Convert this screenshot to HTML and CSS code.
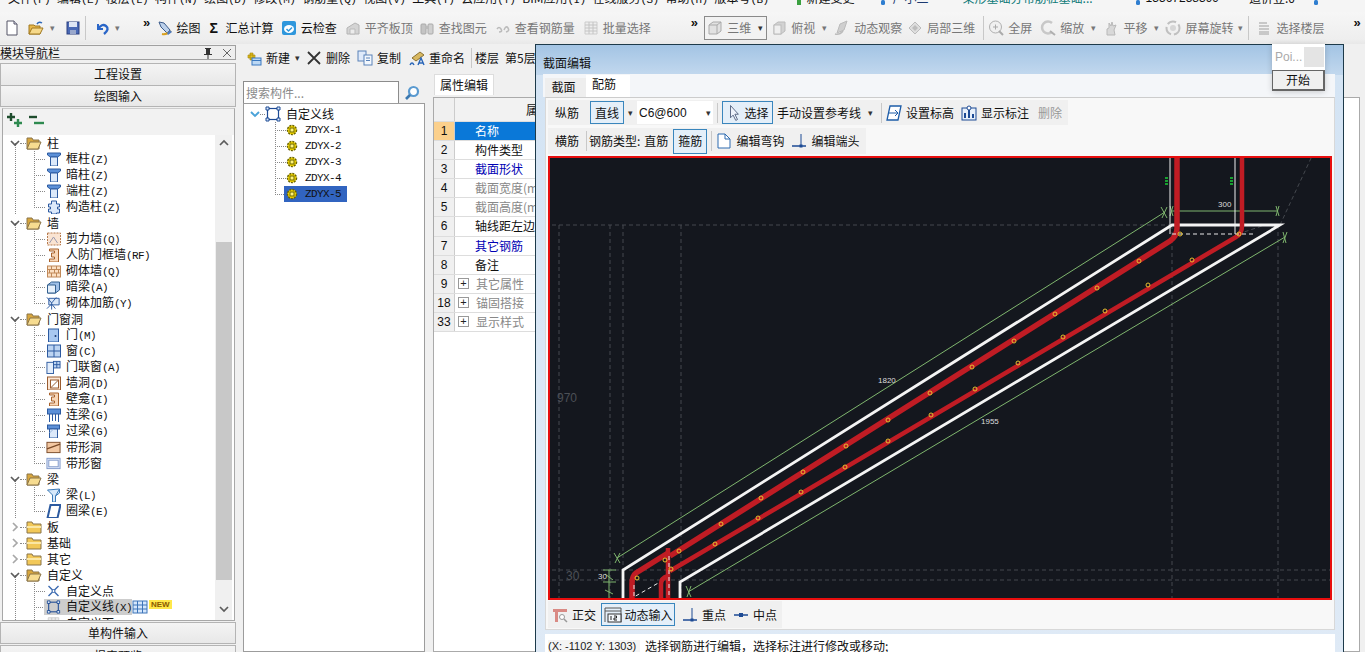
FILE: index.html
```html
<!DOCTYPE html>
<html lang="zh">
<head>
<meta charset="utf-8">
<title>截面编辑</title>
<link rel="stylesheet" href="styles.css">
</head>
<body>
<svg class="defs" xmlns="http://www.w3.org/2000/svg">
  <symbol id="new" viewBox="0 0 16 16"><path d="M3 1h7l3 3v11H3z" fill="#fff" stroke="#556"/><path d="M10 1v3h3" fill="#dde" stroke="#556"/></symbol>
  <symbol id="open" viewBox="0 0 16 16"><path d="M1 14V5h5l1 1h5v8z" fill="#e8b84a" stroke="#a07820"/><path d="M1 14l3-6h11l-3 6z" fill="#f6d98a" stroke="#a07820"/><path d="M9 4q2-3 5-1" fill="none" stroke="#2a66b8" stroke-width="1.5"/></symbol>
  <symbol id="save" viewBox="0 0 16 16"><rect x="2" y="2" width="12" height="12" fill="#4a69b5" stroke="#2c4080"/><rect x="4" y="2" width="8" height="5" fill="#dfe6f5"/><rect x="5" y="10" width="6" height="4" fill="#9aa8cc"/></symbol>
  <symbol id="undo" viewBox="0 0 16 16"><path d="M4 4v5h5" fill="none" stroke="#2a66c8" stroke-width="2"/><path d="M4 9q4-6 8-3t-2 8" fill="none" stroke="#2a66c8" stroke-width="2.4"/></symbol>
  <symbol id="draw" viewBox="0 0 16 16"><path d="M2 2l5 1 6 7-3 3-6-6z" fill="#bcd0ea" stroke="#3a5a8a"/><path d="M5 14q5 1 9-3" fill="none" stroke="#d8a020" stroke-width="2"/><path d="M10 13l3-3 2 2-4 3z" fill="#4a79c0"/></symbol>
  <symbol id="cloud" viewBox="0 0 16 16"><rect x="1" y="1" width="14" height="14" rx="2" fill="#2f97dc"/><ellipse cx="8" cy="9" rx="5" ry="4" fill="#fff"/><path d="M5.500 9l2 2 3.500-3.500" fill="none" stroke="#2f97dc" stroke-width="1.500"/></symbol>
  <symbol id="flat" viewBox="0 0 16 16"><path d="M2 14V8l8-5 4 2v9z" fill="#d4d4d4" stroke="#b4b4b4"/><path d="M5 14V9h5v5z" fill="#ececec" stroke="#bbb"/></symbol>
  <symbol id="find" viewBox="0 0 16 16"><rect x="2" y="4" width="5" height="10" rx="1" fill="#c4c4c4" stroke="#aaa"/><rect x="9" y="4" width="5" height="10" rx="1" fill="#d0d0d0" stroke="#aaa"/><rect x="6" y="6" width="4" height="3" fill="#bbb"/></symbol>
  <symbol id="vrebar" viewBox="0 0 16 16"><path d="M2 9q2-3 4 0t-2 3M9 10q2-5 4-2t-2 4" fill="none" stroke="#bbb" stroke-width="1.500"/></symbol>
  <symbol id="batch" viewBox="0 0 16 16"><path d="M2 2h12v12H2z" fill="#eee" stroke="#ccc"/><path d="M2 5h12M2 8h12M2 11h12M6 2v12M10 2v12" stroke="#c4c4c4"/></symbol>
  <symbol id="cube" viewBox="0 0 16 16"><path d="M2 5l4-3h8v9l-4 3H2z" fill="#e2e2e2" stroke="#aaa"/><path d="M2 5h8v9M10 5l4-3" fill="none" stroke="#aaa"/></symbol>
  <symbol id="cube2" viewBox="0 0 16 16"><path d="M3 5l4-3h7v9l-4 3H3z" fill="#d2d2d2" stroke="#bbb"/><rect x="3" y="5" width="7" height="9" fill="#efefef" stroke="#bbb"/></symbol>
  <symbol id="orbit" viewBox="0 0 16 16"><path d="M3 13l3-9 7-3-3 9z" fill="#cfcfcf" stroke="#bbb"/><path d="M1 14q5 1 8-3" fill="none" stroke="#bbb" stroke-width="1.500"/></symbol>
  <symbol id="local" viewBox="0 0 16 16"><path d="M8 2l6 6-6 6-6-6z" fill="#dedede" stroke="#bbb"/><path d="M5 8l3-3 3 3-3 3z" fill="#bdbdbd"/></symbol>
  <symbol id="zoomall" viewBox="0 0 16 16"><circle cx="7.500" cy="7" r="6" fill="#f0f0f0" stroke="#b0b0b0"/><path d="M5 7h5M7.500 4.500v5" stroke="#aaa"/><path d="M11 11l4 4" stroke="#aaa" stroke-width="2"/></symbol>
  <symbol id="zoom" viewBox="0 0 16 16"><path d="M12 3a6 6 0 1 0 0 9" fill="none" stroke="#c8c8c8" stroke-width="2.500"/><path d="M10 11l5 4" stroke="#b0b0b0" stroke-width="2"/></symbol>
  <symbol id="pan" viewBox="0 0 16 16"><path d="M4 15V9l2-1V3l2 3 1-4 1 4 3-1-2 5 1 5z" fill="#d8d8d8" stroke="#b8b8b8"/></symbol>
  <symbol id="rot" viewBox="0 0 16 16"><circle cx="8" cy="8" r="6.500" fill="none" stroke="#c0c0c0" stroke-width="2" stroke-dasharray="9 3"/><circle cx="8" cy="8" r="3" fill="#d6d6d6"/></symbol>
  <symbol id="floors" viewBox="0 0 16 16"><path d="M3 3h8M3 6h10M3 9h10M3 12h10M3 14h10" stroke="#bbb" stroke-width="1.500"/></symbol>

  <symbol id="fopen" viewBox="0 0 16 14"><path d="M1 13V2h5l1 2h6v9z" fill="#d8a63c" stroke="#8a7448"/><path d="M1 13l3-7h11l-3 7z" fill="#f7dc90" stroke="#8a7448"/></symbol>
  <symbol id="fclosed" viewBox="0 0 16 14"><path d="M1 13V2h5l1 2h8v9z" fill="#f2c858" stroke="#8a7448"/><path d="M1 6h14v2H1z" fill="#fbe7a4"/></symbol>
  <symbol id="col" viewBox="0 0 14 14"><path d="M1 1h13v2l-3 2H4L1 3z" fill="#5c90d8" stroke="#2c5aa0"/><path d="M4 5h7v9H4z" fill="#dce9fa" stroke="#2c5aa0"/></symbol>
  <symbol id="scol" viewBox="0 0 14 14"><path d="M5 1h5v3h3v3h-2v2h2v4h-3v1H5v-2H2V9h2V7H2V4h3z" fill="#dce9fa" stroke="#2c5aa0"/></symbol>
  <symbol id="shear" viewBox="0 0 14 14"><rect x="1" y="1" width="13" height="12" fill="#fae4d2" stroke="#b77b4e" stroke-dasharray="2 1"/><path d="M3 11l4-6 4 6" fill="none" stroke="#9a9ab0"/></symbol>
  <symbol id="dframe" viewBox="0 0 14 14"><path d="M3 1h9v13H3v-3h5V9H5V5h3V3H3z" fill="#f8d7b8" stroke="#a8622c"/></symbol>
  <symbol id="brick" viewBox="0 0 14 14"><rect x="1" y="2" width="13" height="11" fill="#fbe0c4" stroke="#c08858"/><path d="M1 5.500h13M1 9h13M5 2v3.500M10 2v3.500M3 5.500V9M8 5.500V9M12 5.500V9M5 9v4M10 9v4" stroke="#c08858" fill="none"/></symbol>
  <symbol id="hbeam" viewBox="0 0 14 14"><path d="M1 5l4-3h8v8l-4 3H1z" fill="#9fc0e8" stroke="#33608f"/><path d="M1 5h8v8H1z" fill="#e6f0fb" stroke="#33608f"/></symbol>
  <symbol id="mreb" viewBox="0 0 16 14"><path d="M3 2h11v7H3z" fill="#dbe8f8" stroke="#2c5aa0"/><path d="M1 1l5 6 5-6M6 7v7M1 13l5-5 4 5" fill="none" stroke="#2c5aa0"/></symbol>
  <symbol id="door" viewBox="0 0 14 14"><rect x="2" y="1" width="10" height="13" fill="#a8c8f0" stroke="#2c5aa0"/><circle cx="9" cy="8" r="1" fill="#1c3a70"/></symbol>
  <symbol id="win" viewBox="0 0 14 14"><rect x="1" y="1" width="13" height="12" fill="#bcd4f2" stroke="#2c5aa0"/><path d="M7.500 1v12M1 7h13" stroke="#2c5aa0"/></symbol>
  <symbol id="dwin" viewBox="0 0 16 14"><rect x="1" y="2" width="7" height="12" fill="#e4eefb" stroke="#2c5aa0"/><rect x="8" y="1" width="7" height="7" fill="#bcd4f2" stroke="#2c5aa0"/><path d="M11.500 1v7M8 4.500h7" stroke="#2c5aa0"/></symbol>
  <symbol id="hole" viewBox="0 0 14 14"><rect x="1" y="1" width="13" height="13" fill="#fbe6d4" stroke="#9a5c30"/><rect x="4" y="4" width="8" height="8" fill="#fff" stroke="#9a5c30"/><path d="M4 12l8-8" stroke="#9a5c30"/></symbol>
  <symbol id="lbeam" viewBox="0 0 14 14"><rect x="1" y="1" width="13" height="5" fill="#5c90d8" stroke="#2c5aa0"/><path d="M3 6v8M6 6v7M9 6v7M12 6v8" stroke="#2c5aa0"/></symbol>
  <symbol id="lintel" viewBox="0 0 14 14"><rect x="1" y="1" width="12" height="4" fill="#5c90d8" stroke="#2c5aa0"/><path d="M3 5h8v9H3z" fill="#dce9fa" stroke="#2c5aa0"/><path d="M3 9l4-4" stroke="#9ab8e0"/></symbol>
  <symbol id="shole" viewBox="0 0 16 14"><rect x="1" y="2" width="14" height="11" fill="#f3c8a2" stroke="#7a4a28"/><path d="M1 9l14-5" stroke="#7a4a28" stroke-width="1.500"/></symbol>
  <symbol id="swin" viewBox="0 0 16 14"><rect x="1" y="2" width="14" height="11" fill="#dfe8fa" stroke="#8098c8"/><rect x="3" y="4" width="10" height="7" fill="#fff" stroke="#8098c8"/></symbol>
  <symbol id="beam" viewBox="0 0 14 14"><path d="M1 2l12-1v4L9 8v6H6V7z" fill="#d6e8fa" stroke="#3c7ab8"/><path d="M9 8L13 1" stroke="#3c7ab8"/></symbol>
  <symbol id="ring" viewBox="0 0 14 14"><path d="M4 1h10l-3 13H1z" fill="#fff" stroke="#2c5aa0" stroke-width="2"/></symbol>
  <symbol id="xpt" viewBox="0 0 14 14"><path d="M2 2l10 10M12 2L2 12" stroke="#3c6ab0" stroke-width="1.400"/><circle cx="7" cy="7" r="1.500" fill="#fff" stroke="#3c6ab0"/></symbol>
  <symbol id="box" viewBox="0 0 16 16"><rect x="2.500" y="2.500" width="11" height="11" fill="none" stroke="#1d4a94" stroke-width="1.200"/><path d="M1 1h3v3H1zM12 1h3v3h-3zM1 12h3v3H1zM12 12h3v3h-3z" fill="#dce9fa" stroke="#1d4a94"/></symbol>
  <symbol id="gear" viewBox="0 0 12 12"><circle cx="6" cy="6" r="4.500" fill="#ffe000" stroke="#6a6400" stroke-width="1.500" stroke-dasharray="2 1"/><rect x="4" y="4" width="4" height="4" fill="#fff47a" stroke="#6a6400"/></symbol>
  <symbol id="grid" viewBox="0 0 16 14"><rect x="1" y="1" width="14" height="12" fill="#d4e6fb" stroke="#3d74b8"/><path d="M5.500 1v12M10.500 1v12M1 5h14M1 9h14" stroke="#3d74b8"/></symbol>

  <symbol id="add" viewBox="0 0 16 16"><path d="M2 5h7v3H2zM4 3h3v7H4z" fill="#e6c020" stroke="#a08000" stroke-width=".6"/><rect x="6" y="8" width="9" height="7" fill="#bcd8f4" stroke="#3a78c0"/><path d="M6 10.500h9" stroke="#3a78c0"/></symbol>
  <symbol id="del" viewBox="0 0 16 16"><path d="M2 2l12 12M14 2L2 14" stroke="#333" stroke-width="1.800"/></symbol>
  <symbol id="copy" viewBox="0 0 16 16"><rect x="1" y="1" width="8" height="10" fill="#dfeafa" stroke="#5a82b8"/><rect x="7" y="5" width="8" height="10" fill="#f2f7fd" stroke="#5a82b8"/><path d="M9 8h4M9 10.500h4" stroke="#5a82b8"/></symbol>
  <symbol id="ren" viewBox="0 0 16 16"><path d="M3 8l8-6 4 3-8 6z" fill="#d8b860" stroke="#8a7030"/><path d="M1 15q2-4 4 0M9 15l3-7 3 7M10 13h4" fill="none" stroke="#2a66b8" stroke-width="1.400"/></symbol>
  <symbol id="search" viewBox="0 0 16 16"><circle cx="9.500" cy="6.500" r="4.500" fill="#fff" stroke="#5a9ad0" stroke-width="2.200"/><path d="M6 10l-4 4" stroke="#3a78b0" stroke-width="2.600"/></symbol>
  <symbol id="plus" viewBox="0 0 18 16"><path d="M5 1v8M1 5h8" stroke="#1f4d2e" stroke-width="2.400"/><path d="M12 7v8M8 11h8" stroke="#2e8a50" stroke-width="2.400"/></symbol>
  <symbol id="minus" viewBox="0 0 18 16"><path d="M1 5h8" stroke="#1f4d2e" stroke-width="2.400"/><path d="M6 11h10" stroke="#2e8a50" stroke-width="2.400"/></symbol>
  <symbol id="cursor" viewBox="0 0 16 18"><path d="M4 1l9 10H9l3 6-2 1-3-6-3 3z" fill="#eef3fb" stroke="#4a5a78"/></symbol>
  <symbol id="elev" viewBox="0 0 16 16"><path d="M4 1h11l-3 14H1z" fill="#fff" stroke="#1d5ca8" stroke-width="1.300"/><path d="M3 8h9M9 5l3 3-3 3" fill="none" stroke="#1d5ca8"/></symbol>
  <symbol id="mark" viewBox="0 0 16 16"><rect x="1" y="3" width="14" height="12" fill="#e8f0fa" stroke="#1d4a94"/><path d="M4 13V8M8 13V5M12 13V9" stroke="#1d4a94" stroke-width="2"/><circle cx="8" cy="3" r="2" fill="#fff" stroke="#1d4a94"/></symbol>
  <symbol id="hook" viewBox="0 0 16 16"><path d="M2 1h7l5 5v9H2z" fill="#fff" stroke="#2c6ab0"/><path d="M9 1v5h5" fill="none" stroke="#2c6ab0"/></symbol>
  <symbol id="end" viewBox="0 0 16 16"><path d="M1 13h14" stroke="#1d4a94" stroke-width="1.500"/><path d="M10 1v11" stroke="#1d4a94"/><rect x="8.500" y="11.500" width="3" height="3" fill="#1d4a94"/></symbol>
  <symbol id="mid" viewBox="0 0 16 16"><path d="M1 8h14" stroke="#1d4a94" stroke-width="1.500"/><rect x="6" y="6" width="4" height="4" fill="#1d4a94"/></symbol>
  <symbol id="ortho" viewBox="0 0 16 16"><path d="M1 2h14v3H6v10H3V5H1z" fill="#d98a84"/><circle cx="10" cy="10" r="2.500" fill="#fff" stroke="#999"/><path d="M12 12l3 3" stroke="#999" stroke-width="1.500"/></symbol>
  <symbol id="dyn" viewBox="0 0 18 16"><path d="M1 1h16M1 4h16M1 1v14M17 1v14" fill="none" stroke="#555"/><rect x="4" y="7" width="13" height="8" fill="#f4f8fc" stroke="#333"/><path d="M7 9v4M10 9h2.500v2H10v2h3" fill="none" stroke="#222"/></symbol>
  <symbol id="chev" viewBox="0 0 10 10"><path d="M1 3l4 4 4-4" fill="none" stroke="#5c5c5c" stroke-width="1.700"/></symbol>
  <symbol id="chevr" viewBox="0 0 10 10"><path d="M3 1l4 4-4 4" fill="none" stroke="#a8a8a8" stroke-width="1.700"/></symbol>
  <symbol id="chevb" viewBox="0 0 10 10"><path d="M1 3l4 4 4-4" fill="none" stroke="#4aa2d8" stroke-width="1.900"/></symbol>
  <symbol id="pin" viewBox="0 0 10 12"><path d="M2 1h6v1H7v5h2v1H5.500v4h-1V8H1V7h2V2H2z" fill="#333"/></symbol>
  <symbol id="close" viewBox="0 0 10 10"><path d="M1 1l8 8M9 1L1 9" stroke="#666"/></symbol>
  <symbol id="dotg" viewBox="0 0 12 12"><rect x="2" y="0" width="8" height="10" fill="#3aa040"/></symbol>
  <symbol id="dotb" viewBox="0 0 12 12"><rect x="2" y="0" width="8" height="10" rx="3" fill="#2f7ed0"/></symbol>
</svg>

<div class="menu">
  <span class="mi m8">文件<span class="lat">(F)</span></span><span class="mi">编辑<span class="lat">(E)</span></span><span class="mi">楼层<span class="lat">(L)</span></span><span class="mi">构件<span class="lat">(N)</span></span><span class="mi">绘图<span class="lat">(D)</span></span><span class="mi">修改<span class="lat">(M)</span></span><span class="mi">钢筋量<span class="lat">(Q)</span></span><span class="mi">视图<span class="lat">(V)</span></span><span class="mi">工具<span class="lat">(T)</span></span><span class="mi">云应用<span class="lat">(Y)</span></span><span class="mi">BIM应用<span class="lat">(I)</span></span><span class="mi">在线服务<span class="lat">(S)</span></span><span class="mi">帮助<span class="lat">(H)</span></span><span class="mi">版本号<span class="lat">(B)</span></span>
  <svg class="mic m-g"><use href="#dotg"/></svg><span class="mi mnew">新建变更</span><svg class="mic m-b1"><use href="#dotb"/></svg><span class="mi mguang">广小二</span><span class="mi mlink">束形基础分布筋桩基础...</span><svg class="mic m-b2"><use href="#dotb"/></svg><span class="mi mphone">13567258399</span><span class="mi mbean">造价豆:0</span><svg class="mic m-b3"><use href="#dotb"/></svg>
</div>

<div class="toolbar">
  <svg class="ic16 t-first"><use href="#new"/></svg>
  <svg class="ic16"><use href="#open"/></svg><span class="drop t-dr1">▾</span>
  <svg class="ic16"><use href="#save"/></svg>
  <span class="vsep t-sep1"></span>
  <svg class="ic16"><use href="#undo"/></svg><span class="drop t-dr2">▾</span>
  <span class="more t-more1">»</span>
  <span class="tb t-draw"><svg class="ic16"><use href="#draw"/></svg>绘图</span>
  <span class="tb"><b class="sigma">Σ</b>汇总计算</span>
  <span class="tb t-n1"><svg class="ic16"><use href="#cloud"/></svg>云检查</span>
  <span class="tb off"><svg class="ic16"><use href="#flat"/></svg>平齐板顶</span>
  <span class="tb off t-n2"><svg class="ic16"><use href="#find"/></svg>查找图元</span>
  <span class="tb off"><svg class="ic16"><use href="#vrebar"/></svg>查看钢筋量</span>
  <span class="tb off"><svg class="ic16"><use href="#batch"/></svg>批量选择</span>
  <span class="more t-more2">»</span>
  <span class="tb off t-3d"><svg class="ic16"><use href="#cube"/></svg>三维<span class="drop dk">▾</span></span>
  <span class="tb off t-n4"><svg class="ic16"><use href="#cube2"/></svg>俯视<span class="drop">▾</span></span>
  <span class="tb off t-n3"><svg class="ic16"><use href="#orbit"/></svg>动态观察</span>
  <span class="tb off t-n3"><svg class="ic16"><use href="#local"/></svg>局部三维</span>
  <span class="vsep"></span>
  <span class="tb off t-n4"><svg class="ic16"><use href="#zoomall"/></svg>全屏</span>
  <span class="tb off"><svg class="ic16"><use href="#zoom"/></svg>缩放<span class="drop">▾</span></span>
  <span class="tb off t-n3"><svg class="ic16"><use href="#pan"/></svg>平移<span class="drop">▾</span></span>
  <span class="tb off t-n4"><svg class="ic16"><use href="#rot"/></svg>屏幕旋转<span class="drop nar">▾</span></span>
  <span class="vsep t-n5"></span>
  <span class="tb off t-n1"><svg class="ic16"><use href="#floors"/></svg>选择楼层</span>
  <span class="more t-more3">»</span>
</div>

<div class="main">
  <aside class="nav">
    <div class="nav-head"><span>模块导航栏</span><svg class="pin"><use href="#pin"/></svg><svg class="close"><use href="#close"/></svg></div>
    <div class="nav-btn first">工程设置</div>
    <div class="nav-btn">绘图输入</div>
    <div class="treebox">
      <div class="tree-tools"><svg class="tt"><use href="#plus"/></svg><svg class="tt"><use href="#minus"/></svg></div>
      <div class="tree-wrap">
        <div class="tree">
          <div class="group">
            <div class="row r1"><svg class="chev"><use href="#chev"/></svg><i class="dash"></i><svg class="fold"><use href="#fopen"/></svg><span class="lbl1">柱</span></div>
            <div class="row r2"><i class="guide"></i><svg class="ti"><use href="#col"/></svg><span class="lbl">框柱<span class="lat">(Z)</span></span></div>
            <div class="row r2"><i class="guide"></i><svg class="ti"><use href="#col"/></svg><span class="lbl">暗柱<span class="lat">(Z)</span></span></div>
            <div class="row r2"><i class="guide"></i><svg class="ti"><use href="#col"/></svg><span class="lbl">端柱<span class="lat">(Z)</span></span></div>
            <div class="row r2"><i class="guide last"></i><svg class="ti"><use href="#scol"/></svg><span class="lbl">构造柱<span class="lat">(Z)</span></span></div>
          </div>
          <div class="group">
            <div class="row r1"><svg class="chev"><use href="#chev"/></svg><i class="dash"></i><svg class="fold"><use href="#fopen"/></svg><span class="lbl1">墙</span></div>
            <div class="row r2"><i class="guide"></i><svg class="ti"><use href="#shear"/></svg><span class="lbl">剪力墙<span class="lat">(Q)</span></span></div>
            <div class="row r2"><i class="guide"></i><svg class="ti"><use href="#dframe"/></svg><span class="lbl">人防门框墙<span class="lat">(RF)</span></span></div>
            <div class="row r2"><i class="guide"></i><svg class="ti"><use href="#brick"/></svg><span class="lbl">砌体墙<span class="lat">(Q)</span></span></div>
            <div class="row r2"><i class="guide"></i><svg class="ti"><use href="#hbeam"/></svg><span class="lbl">暗梁<span class="lat">(A)</span></span></div>
            <div class="row r2"><i class="guide last"></i><svg class="ti"><use href="#mreb"/></svg><span class="lbl">砌体加筋<span class="lat">(Y)</span></span></div>
          </div>
          <div class="group">
            <div class="row r1"><svg class="chev"><use href="#chev"/></svg><i class="dash"></i><svg class="fold"><use href="#fopen"/></svg><span class="lbl1">门窗洞</span></div>
            <div class="row r2"><i class="guide"></i><svg class="ti"><use href="#door"/></svg><span class="lbl">门<span class="lat">(M)</span></span></div>
            <div class="row r2"><i class="guide"></i><svg class="ti"><use href="#win"/></svg><span class="lbl">窗<span class="lat">(C)</span></span></div>
            <div class="row r2"><i class="guide"></i><svg class="ti"><use href="#dwin"/></svg><span class="lbl">门联窗<span class="lat">(A)</span></span></div>
            <div class="row r2"><i class="guide"></i><svg class="ti"><use href="#hole"/></svg><span class="lbl">墙洞<span class="lat">(D)</span></span></div>
            <div class="row r2"><i class="guide"></i><svg class="ti"><use href="#dframe"/></svg><span class="lbl">壁龛<span class="lat">(I)</span></span></div>
            <div class="row r2"><i class="guide"></i><svg class="ti"><use href="#lbeam"/></svg><span class="lbl">连梁<span class="lat">(G)</span></span></div>
            <div class="row r2"><i class="guide"></i><svg class="ti"><use href="#lintel"/></svg><span class="lbl">过梁<span class="lat">(G)</span></span></div>
            <div class="row r2"><i class="guide"></i><svg class="ti"><use href="#shole"/></svg><span class="lbl">带形洞</span></div>
            <div class="row r2"><i class="guide last"></i><svg class="ti"><use href="#swin"/></svg><span class="lbl">带形窗</span></div>
          </div>
          <div class="group">
            <div class="row r1"><svg class="chev"><use href="#chev"/></svg><i class="dash"></i><svg class="fold"><use href="#fopen"/></svg><span class="lbl1">梁</span></div>
            <div class="row r2"><i class="guide"></i><svg class="ti"><use href="#beam"/></svg><span class="lbl">梁<span class="lat">(L)</span></span></div>
            <div class="row r2"><i class="guide last"></i><svg class="ti"><use href="#ring"/></svg><span class="lbl">圈梁<span class="lat">(E)</span></span></div>
          </div>
          <div class="row r1"><svg class="chev"><use href="#chevr"/></svg><i class="dash"></i><svg class="fold"><use href="#fclosed"/></svg><span class="lbl1">板</span></div>
          <div class="row r1"><svg class="chev"><use href="#chevr"/></svg><i class="dash"></i><svg class="fold"><use href="#fclosed"/></svg><span class="lbl1">基础</span></div>
          <div class="row r1"><svg class="chev"><use href="#chevr"/></svg><i class="dash"></i><svg class="fold"><use href="#fclosed"/></svg><span class="lbl1">其它</span></div>
          <div class="group">
            <div class="row r1"><svg class="chev"><use href="#chev"/></svg><i class="dash"></i><svg class="fold"><use href="#fopen"/></svg><span class="lbl1">自定义</span></div>
            <div class="row r2"><i class="guide"></i><svg class="ti"><use href="#xpt"/></svg><span class="lbl">自定义点</span></div>
            <div class="row r2"><i class="guide"></i><span class="sel-nav"><svg class="ti"><use href="#box"/></svg><span class="lbl">自定义线<span class="lat">(X)</span></span></span><svg class="gridic"><use href="#grid"/></svg><span class="newb">NEW</span></div>
            <div class="row r2"><i class="guide"></i><svg class="ti"><use href="#batch"/></svg><span class="lbl">自定义面</span></div>
          </div>
        </div>
        <div class="sbar">
          <svg class="sarrow up"><use href="#chev"/></svg>
          <div class="sthumb"></div>
          <svg class="sarrow"><use href="#chev"/></svg>
        </div>
      </div>
    </div>
    <div class="nav-btn bottom">单构件输入</div>
    <div class="nav-btn">报表预览</div>
  </aside>

  <section class="comp">
    <div class="comp-tools">
      <span class="tb c-new"><svg class="ic16"><use href="#add"/></svg>新建<span class="drop dk nar">▾</span></span>
      <span class="tb"><svg class="ic16"><use href="#del"/></svg>删除</span>
      <span class="tb"><svg class="ic16"><use href="#copy"/></svg>复制</span>
      <span class="tb c-ren"><svg class="ic16"><use href="#ren"/></svg>重命名</span>
      <span class="vsep"></span>
      <span class="tb">楼层</span>
      <span class="tb">第5层</span>
    </div>
    <div class="search"><div class="search-in">搜索构件...</div><svg class="search-ic"><use href="#search"/></svg></div>
    <div class="ctree">
      <div class="row c1"><svg class="chev"><use href="#chevb"/></svg><i class="dash short"></i><svg class="ic16"><use href="#box"/></svg><span class="lbl">自定义线</span></div>
      <div class="row c2"><i class="guide"></i><svg class="gr"><use href="#gear"/></svg><span class="lat lbl2">ZDYX-1</span></div>
      <div class="row c2"><i class="guide"></i><svg class="gr"><use href="#gear"/></svg><span class="lat lbl2">ZDYX-2</span></div>
      <div class="row c2"><i class="guide"></i><svg class="gr"><use href="#gear"/></svg><span class="lat lbl2">ZDYX-3</span></div>
      <div class="row c2"><i class="guide"></i><svg class="gr"><use href="#gear"/></svg><span class="lat lbl2">ZDYX-4</span></div>
      <div class="row c2"><i class="guide last"></i><span class="sel-comp"><svg class="gr"><use href="#gear"/></svg><span class="lat lbl2">ZDYX-5</span></span></div>
    </div>
  </section>

  <section class="props">
    <div class="ptabs"><span class="ptab">属性编辑</span></div>
    <div class="ptable">
      <div class="phead"><span class="pnum"></span><span class="pcell hd">属</span></div>
      <div class="prow"><span class="pnum cur">1</span><span class="pcell sel">名称</span></div>
      <div class="prow"><span class="pnum">2</span><span class="pcell">构件类型</span></div>
      <div class="prow"><span class="pnum">3</span><span class="pcell blue">截面形状</span></div>
      <div class="prow"><span class="pnum">4</span><span class="pcell grey">截面宽度(mm)</span></div>
      <div class="prow"><span class="pnum">5</span><span class="pcell grey">截面高度(mm)</span></div>
      <div class="prow"><span class="pnum">6</span><span class="pcell">轴线距左边线距离(mm)</span></div>
      <div class="prow"><span class="pnum">7</span><span class="pcell blue">其它钢筋</span></div>
      <div class="prow"><span class="pnum">8</span><span class="pcell">备注</span></div>
      <div class="prow"><span class="pnum">9</span><span class="pcell grey ex"><b class="pm">+</b>其它属性</span></div>
      <div class="prow"><span class="pnum">18</span><span class="pcell grey ex"><b class="pm">+</b>锚固搭接</span></div>
      <div class="prow"><span class="pnum">33</span><span class="pcell grey ex"><b class="pm">+</b>显示样式</span></div>
    </div>
  </section>
</div>

<div class="dialog">
  <div class="dlg-title">截面编辑</div>
  <div class="dlg-tabs"><span class="dtab">截面</span><span class="dtab on">配筋</span></div>
  <div class="dlg-body">
    <div class="rowbar r-a">
      <span class="t-lab">纵筋</span>
      <span class="btn act b-line">直线</span><span class="drop dk d-line">▾</span>
      <span class="combo">C6@600<span class="drop dk">▾</span></span>
      <span class="vsep"></span>
      <span class="btn act b-sel"><svg class="cur-ic"><use href="#cursor"/></svg>选择</span>
      <span>手动设置参考线</span><span class="drop dk">▾</span>
      <span class="vsep v-r"></span>
      <span class="tb"><svg class="ic16"><use href="#elev"/></svg>设置标高</span>
      <span class="tb t-mark"><svg class="ic16"><use href="#mark"/></svg>显示标注</span>
      <span class="dis">删除</span>
    </div>
    <div class="rowbar r-b">
      <span class="t-lab">横筋</span>
      <span class="vsep"></span>
      <span class="kind">钢筋类型:</span><span>直筋</span>
      <span class="btn act b-hoop">箍筋</span>
      <span class="vsep"></span>
      <span class="tb"><svg class="ic16"><use href="#hook"/></svg>编辑弯钩</span>
      <span class="tb t-endb"><svg class="ic16"><use href="#end"/></svg>编辑端头</span>
    </div>
    <div class="canvas">
      <svg class="draw" viewBox="550 158 780 440" xmlns="http://www.w3.org/2000/svg">
        <g class="gdash">
          <path d="M552 225H1172M552 570H1330M552 580H1330M559 225V598M610 225V598M623 225V598M681 225V598M1172 225V598M1278 225V598M1280 225L1312 156M1238 234L1265 225"/>
        </g>
        <text class="dimtxt" x="557" y="402">970</text>
        <text class="dimtxt" x="566" y="580">30</text>
        <g class="gline">
          <path d="M617 558L1165 212M688 592L1285 237M1172 211H1278M609 570V598M603 570H616M603 582H616"/>
          <path d="M614 553L620 563M620 553L615 563M1161 207L1167 218M1167 207L1162 218M1170 206L1173 216M1173 206L1170 216M1276 206L1279 216M1279 206L1276 216M1283 232L1286 243M1287 232L1283 243M686 586L691 597M691 586L687 597M605 574L613 580M605 590L613 594"/>
        </g>
        <path class="wthin" d="M1170 156V234M1235 156V234"/>
        <path class="wthick" d="M623 598V570L1172 225H1280L680 582V598"/>
        <path class="rebar r1w" d="M1177 156V228Q1177 236 1170 241L670 556"/>
        <path class="rebar r2w" d="M1242 156V226Q1242 234 1236 237L670 571"/>
        <path class="rebar r1w" d="M668 553L636 573Q632 576 632 584V598"/>
        <path class="rebar r2w" d="M668 548V598M661 598V584Q661 578 668 576"/>
        <path class="wdash" d="M1172 234H1256M669 556V598M634 585V597L660 582"/>
        <g class="dots">
          <circle cx="1180" cy="234" r="2"/><circle cx="1139" cy="261" r="2"/><circle cx="1097" cy="288" r="2"/><circle cx="1055" cy="314" r="2"/><circle cx="1014" cy="341" r="2"/><circle cx="972" cy="367" r="2"/><circle cx="930" cy="393" r="2"/><circle cx="888" cy="420" r="2"/><circle cx="846" cy="446" r="2"/><circle cx="803" cy="472" r="2"/><circle cx="761" cy="498" r="2"/><circle cx="721" cy="524" r="2"/><circle cx="679" cy="551" r="2"/><circle cx="665" cy="560" r="2"/><circle cx="637" cy="578" r="2"/>
          <circle cx="1239" cy="234" r="2"/><circle cx="1192" cy="260" r="2"/><circle cx="1148" cy="285" r="2"/><circle cx="1105" cy="311" r="2"/><circle cx="1063" cy="337" r="2"/><circle cx="1018" cy="363" r="2"/><circle cx="975" cy="389" r="2"/><circle cx="931" cy="415" r="2"/><circle cx="888" cy="441" r="2"/><circle cx="845" cy="467" r="2"/><circle cx="801" cy="492" r="2"/><circle cx="758" cy="518" r="2"/><circle cx="715" cy="544" r="2"/><circle cx="671" cy="569" r="2"/>
        </g>
        <g class="gmark"><path d="M1165 177h3v2h-3zM1165 180h3v2h-3zM1165 183h3v2h-3zM1230 177h3v2h-3zM1230 180h3v2h-3zM1230 183h3v2h-3z"/></g>
        <text class="lab" x="878" y="383">1820</text>
        <text class="lab" x="981" y="424">1955</text>
        <text class="lab" x="1218" y="207">300</text>
        <text class="lab" x="598" y="579">30</text>
      </svg>
    </div>
    <div class="rowbar r-c">
      <span class="tb"><svg class="ic16"><use href="#ortho"/></svg>正交</span>
      <span class="btn act b-dyn"><svg class="ic-dyn"><use href="#dyn"/></svg>动态输入</span>
      <span class="tb"><svg class="ic16"><use href="#end"/></svg>重点</span>
      <span class="tb t-mid"><svg class="ic16"><use href="#mid"/></svg>中点</span>
    </div>
  </div>
  <div class="status"><span class="coords">(X: -1102 Y: 1303)</span><span class="hint">选择钢筋进行编辑，选择标注进行修改或移动;</span></div>
</div>

<div class="popup">
  <div class="pop-top"><span class="pop-t">Poi...</span><span class="pop-x"></span></div>
  <div class="pop-btn">开始</div>
</div>
</body>
</html>
```

FILE: styles.css
```css
* { box-sizing: border-box; }
html, body { margin: 0; height: 652px; overflow: hidden; }
body {
  width: 1365px;
  background: #f0f0f0;
  color: #111;
  font: 12px/16px "Noto Sans CJK SC", "Noto Sans", sans-serif;
  position: relative;
}
svg { display: block; flex: none; }
.defs { width: 0; height: 0; position: absolute; }
i { font-style: normal; }
.lat { font-family: "Liberation Mono", monospace; font-size: 11px; letter-spacing: -.6px; }

/* menu */
.menu { height: 12px; display: flex; align-items: flex-start; overflow: hidden; background: #f5f5f5; white-space: nowrap; }
.mi { margin-top: -9px; line-height: 14px; margin-right: 7px; flex: none; }
.m8 { margin-left: 8px; }
.mic { width: 12px; height: 6px; flex: none; margin-left: 6px; }
.m-g { margin-left: 17px; }
.mnew { margin-left: 2px; margin-right: 0; }
.m-b1 { margin-left: 22px; }
.mguang { margin-left: 4px; color: #1c3a70; }
.mlink { margin-left: 27px; color: #0d7a78; width: 130px; overflow: hidden; }
.m-b2 { margin-left: 32px; }
.mphone { margin-left: 2px; font-family: "Liberation Sans", sans-serif; margin-right: 30px; }
.mbean { margin-left: 0; }
.m-b3 { margin-left: 8px; }

/* toolbars */
.toolbar {
  height: 32px; display: flex; align-items: center; gap: 8px; white-space: nowrap;
  background: linear-gradient(#f6f6f6, #eeeeee 85%, #e8e8e8);
}
.ic16 { width: 16px; height: 16px; }
.tb { display: inline-flex; align-items: center; gap: 4px; flex: none; }
.off { color: #777; }
.t-first { margin-left: 4px; }
.t-dr1 { margin-left: -5px; }
.t-sep1 { margin-left: -4px; }
.t-dr2 { margin-left: -6px; }
.t-more1 { margin-left: 13px; }
.t-draw { margin-left: -6px; }
.t-more2 { margin-left: 32px; }
.t-3d { border: 1px solid #8a8a8a; height: 24px; padding: 0 3px 0 2px; width: 63px; background: #f2f2f2; margin-left: -6px; }
.t-n1 { margin-left: -1px; }
.t-n2 { margin-left: -2px; }
.t-n3 { margin-left: -3px; }
.t-n4 { margin-left: -4px; }
.t-n5 { margin-left: -5px; }
.t-more3 { margin-left: 21px; }
.sigma { width: 10px; text-align: center; font: bold 14px "Liberation Sans", sans-serif; margin-right: 3px; }
.drop { font-size: 9px; color: #777; width: 10px; text-align: center; flex: none; }
.dk { color: #333; }
.nar { margin-left: -2px; }
.more { font: bold 13px/10px "Liberation Sans", sans-serif; align-self: flex-start; margin-top: 6px; width: 12px; }
.vsep { width: 1px; height: 24px; background: #c8c8c8; flex: none; }

/* main area */
.main { height: 608px; display: flex; }
.nav { width: 236px; margin-right: 7px; padding-top: 1px; display: flex; flex-direction: column; flex: none; }
.nav-head { height: 15px; display: flex; align-items: center; border: 1px solid #a0a0a0; border-width: 1px 1px 1px 0; line-height: 14px; background: #eee; margin-bottom: 3px; }
.nav-head span { flex: 1; }
.pin { width: 10px; height: 12px; margin-right: 9px; }
.close { width: 10px; height: 10px; margin-right: 3px; }
.nav-btn { height: 22px; flex: none; text-align: center; line-height: 19px; border: 1px solid #b4b4b4; background: linear-gradient(#f4f4f4, #e8e8e8); }
.nav-btn.first { border-bottom: 0; }
.nav-btn.bottom { margin-top: 1px; margin-bottom: 1px; }
.treebox { flex: none; height: 513px; margin: 1px 1px 0 2px; border: 1px solid #a8a8a8; border-top-color: #ccc; display: flex; flex-direction: column; background: #fff; }
.tree-tools { height: 26px; display: flex; gap: 4px; padding: 3px 0 0 3px; background: #f2f2f2; flex: none; }
.tt { width: 18px; height: 16px; }
.tree-wrap { flex: 1; display: flex; min-height: 0; }
.tree { flex: 1; overflow: hidden; min-width: 0; white-space: nowrap; }
.group { background: repeating-linear-gradient(#888 0 1px, transparent 1px 2px) 12px 8px / 1px 100% no-repeat; }
.row { height: 16px; display: flex; align-items: center; }
.r1 { padding-left: 7px; }
.r2 { padding-left: 31px; }
.chev { width: 10px; height: 10px; }
.dash { width: 6px; border-bottom: 1px dotted #888; flex: none; }
.fold { width: 16px; height: 14px; }
.lbl1 { margin-left: 5px; }
.lbl { margin-left: 5px; }
.guide { width: 12px; height: 16px; flex: none; align-self: flex-start; background:
  repeating-linear-gradient(#888 0 1px, transparent 1px 2px) 0 0 / 1px 100% no-repeat,
  repeating-linear-gradient(90deg, #888 0 1px, transparent 1px 2px) 0 8px / 100% 1px no-repeat; }
.guide.last { background:
  repeating-linear-gradient(#888 0 1px, transparent 1px 2px) 0 0 / 1px 9px no-repeat,
  repeating-linear-gradient(90deg, #888 0 1px, transparent 1px 2px) 0 8px / 100% 1px no-repeat; }
.ti { width: 15px; height: 14px; }
.sel-nav { display: flex; align-items: center; height: 16px; background: #cdcdcd; width: 88px; margin-left: -2px; padding-left: 2px; }
.sel-nav .lbl { margin-left: 5px; }
.gridic { width: 16px; height: 14px; }
.newb { background: #ffe84a; color: #8a5a00; font: bold 8px/9px "Liberation Sans", sans-serif; padding: 0 2px; align-self: flex-start; margin: 1px 0 0 1px; }
.sbar { width: 17px; flex: none; background: #f0f0f0; display: flex; flex-direction: column; align-items: center; margin-right: 2px; }
.sarrow { width: 10px; height: 10px; margin: 3px 0; }
.sarrow.up { transform: scaleY(-1); margin: 3px 0 94px; }
.sthumb { width: 16px; height: 338px; background: #c8c8c8; margin-bottom: 21px; }

.comp { width: 182px; flex: none; margin-right: 8px; display: flex; flex-direction: column; }
.comp-tools { height: 27px; display: flex; align-items: center; gap: 7px; padding-left: 3px; white-space: nowrap; flex: none; }
.c-new { margin-right: -3px; }
.c-ren { margin-left: 1px; margin-right: -1px; }
.comp-tools .vsep { height: 20px; margin: 0 -4px 0 0; }
.comp-tools .tb:last-child { margin-left: -1px; }
.search { height: 23px; margin-top: 10px; display: flex; align-items: center; flex: none; }
.search-in { width: 156px; height: 23px; border: 1px solid #8c8c8c; background: #fff; color: #8a8a8a; padding-left: 2px; line-height: 21px; font-size: 12px; }
.search-ic { width: 16px; height: 16px; margin-left: 5px; }
.ctree { flex: 1; margin-top: -1px; border: 1px solid #9c9c9c; background: #fff; padding-top: 2px; }
.c1 { padding-left: 6px; }
.c1 .dash.short { width: 5px; }
.c1 .lbl { margin-left: 5px; }
.c2 { padding-left: 31px; }
.c2 .guide { width: 11px; }
.gr { width: 12px; height: 12px; }
.lbl2 { margin-left: 7px; }
.sel-comp { display: flex; align-items: center; height: 16px; width: 63px; background: #3164c0; margin-left: -2px; padding-left: 2px; }

.props { flex: 1; margin-right: 5px; display: flex; flex-direction: column; padding-top: 30px; min-width: 0; }
.ptabs { height: 23px; display: flex; flex: none; }
.ptab { width: 60px; height: 21px; background: #fff; text-align: center; line-height: 20px; border: 1px solid #ddd; border-bottom: 0; margin-left: 1px; }
.ptable { flex: 1; background: #fff; border: 1px solid #aaa; }
.phead { height: 24px; width: 160px; display: flex; border-bottom: 1px solid #ddd; background: #f2f2f2; }
.prow { height: 19.100px; width: 160px; display: flex; border-bottom: 1px solid #ddd; }
.pnum { width: 21px; flex: none; text-align: center; background: #f0f0f0; border-right: 1px solid #ccc; line-height: 18px; font-family: "Liberation Sans", sans-serif; }
.pnum.cur { background: #fbd08c; }
.pcell { flex: 1; padding-left: 20px; line-height: 18px; white-space: nowrap; overflow: hidden; }
.pcell.hd { padding-left: 71px; line-height: 24px; }
.pcell.sel { background: #0a78d8; color: #fff; }
.blue { color: #0000b4; }
.grey { color: #888; }
.pcell.ex { padding-left: 3px; display: flex; align-items: center; gap: 7px; }
.pm { width: 11px; height: 11px; border: 1px solid #999; font: 11px/9px "Liberation Sans", sans-serif; color: #222; text-align: center; flex: none; }

/* floating window */
.dialog {
  position: absolute; left: 535px; top: 44px; width: 809px; height: 620px;
  border: 1px solid #1d3a4a; border-bottom: 0;
  background: linear-gradient(#a3c4e4, #c2d8ee 30px, #d4e4f4 30px, #dfeaf6);
  padding: 0 8px 0 7px; display: flex; flex-direction: column;
}
.dlg-title { height: 29px; padding-top: 10px; line-height: 16px; flex: none; }
.dlg-tabs { height: 23px; display: flex; align-items: flex-end; background: #f4f6f9; padding-left: 2px; flex: none; }
.dtab { width: 41px; height: 19px; text-align: center; line-height: 18px; background: #eeeeee; padding-right: 4px; }
.dtab.on { height: 22px; width: 44px; background: #fff; line-height: 18px; padding-right: 8px; }
.dlg-body { height: 533px; flex: none; margin-left: 2px; background: #f8f8f8; border: 1px solid #d8d8d8; border-top-color: #ccc; padding: 2px 2px 0; display: flex; flex-direction: column; }
.rowbar { display: flex; align-items: center; background: #f0f0f0; white-space: nowrap; flex: none; align-self: flex-start; }
.r-a { height: 25px; width: 520px; gap: 4px; padding-left: 7px; }
.r-b { height: 26px; width: 318px; gap: 4px; margin-top: 3px; padding-left: 7px; }
.r-c { height: 27px; width: 234px; gap: 5px; padding-left: 4px; margin-top: 1px; }
.t-lab { margin-right: 7px; }
.r-b .t-lab { margin-right: 3px; }
.rowbar .vsep { height: 20px; }
.btn { display: inline-flex; align-items: center; justify-content: center; height: 23px; flex: none; }
.act { background: #e4eff9; border: 1px solid #3a86bd; }
.b-line { width: 34px; }
.d-line { margin-left: -3px; }
.b-sel { width: 51px; gap: 4px; }
.b-hoop { width: 34px; height: 25px; margin-left: 1px; }
.b-dyn { width: 74px; gap: 3px; margin-right: 2px; }
.cur-ic { width: 14px; height: 17px; }
.ic-dyn { width: 18px; height: 16px; }
.combo { width: 76px; height: 23px; margin-left: -2px; background: #fff; display: flex; align-items: center; justify-content: space-between; padding: 0 0 0 2px; font-family: "Liberation Sans", sans-serif; }
.v-r { margin-left: 2px; }
.t-mark { margin-left: 3px; }
.t-endb { margin-left: 3px; }
.t-mid { margin-left: 2px; }
.dis { color: #999; margin-left: 5px; }
.kind { margin-left: -2px; }
.canvas { height: 444px; margin-top: 2px; width: 784px; flex: none; border: 2px solid #e80e0e; background: #14171e; overflow: hidden; }
.draw { width: 780px; height: 440px; }
.gdash { fill: none; stroke: #44484e; stroke-width: 1; stroke-dasharray: 4 3; }
.gline { fill: none; stroke: #7fb66e; stroke-width: 1; }
.wthin { fill: none; stroke: #f0f0f0; stroke-width: 1; }
.wthick { fill: none; stroke: #f4f4f4; stroke-width: 2.800; }
.wdash { fill: none; stroke: #e8e8e8; stroke-width: 1; stroke-dasharray: 4 3; }
.rebar { fill: none; stroke: #c01c24; }
.r1w { stroke-width: 5.500; }
.r2w { stroke-width: 4.500; }
.dots circle { fill: none; stroke: #e8c030; stroke-width: 1; }
.gmark path { fill: #18a030; }
.lab { fill: #dcdcdc; font: 8px "Liberation Sans", sans-serif; }
.dimtxt { fill: #4c5056; font: 12px "Liberation Sans", sans-serif; }
.status { flex: none; height: 24px; margin-top: 4px; margin-left: 2px; background: #fff; display: flex; align-items: center; gap: 5px; padding-left: 3px; }
.coords { font: 11px "Liberation Sans", sans-serif; color: #222; background: #f4f4f4; width: 92px; }

.popup { position: absolute; left: 1272px; top: 44px; width: 53px; box-shadow: 0 1px 6px rgba(0,0,0,.18); }
.pop-top { height: 26px; background: #fff; display: flex; align-items: center; }
.pop-t { width: 32px; color: #aaa; font: 12px "Liberation Sans", sans-serif; padding-left: 3px; }
.pop-x { width: 20px; height: 20px; background: #e4e4e4; }
.pop-btn { height: 21px; border: 1px solid #666; border-bottom-width: 2px; border-right-width: 2px; background: #f0f0f0; text-align: center; line-height: 18px; }
```
